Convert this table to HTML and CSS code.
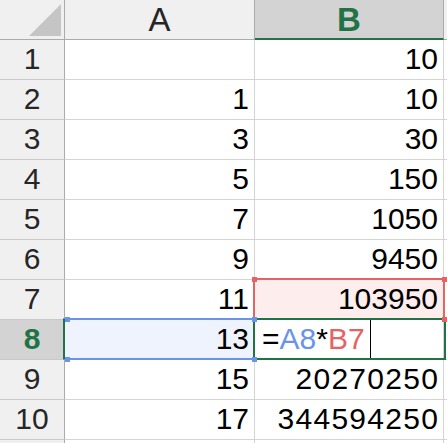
FILE: index.html
```html
<!DOCTYPE html>
<html>
<head>
<meta charset="utf-8">
<link rel="stylesheet" href="styles.css">
</head>
<body>
<div class="sheet">
  <div class="grid">
    <div class="corner"><svg width="64" height="39" viewBox="0 0 64 39"><polygon points="61,4 61,36 29,36" fill="#c5c5c5"/></svg></div>
    <div class="colhead">A</div>
    <div class="colhead sel">B</div>
    <div class="colhead edge"></div>

    <div class="rowhead">1</div><div class="cell"></div><div class="cell">10</div><div class="cell edge"></div>
    <div class="rowhead">2</div><div class="cell">1</div><div class="cell">10</div><div class="cell edge"></div>
    <div class="rowhead">3</div><div class="cell">3</div><div class="cell">30</div><div class="cell edge"></div>
    <div class="rowhead">4</div><div class="cell">5</div><div class="cell">150</div><div class="cell edge"></div>
    <div class="rowhead">5</div><div class="cell">7</div><div class="cell">1050</div><div class="cell edge"></div>
    <div class="rowhead">6</div><div class="cell">9</div><div class="cell">9450</div><div class="cell edge"></div>
    <div class="rowhead">7</div><div class="cell">11</div><div class="cell ref-red">103950</div><div class="cell edge"></div>
    <div class="rowhead sel">8</div><div class="cell ref-blue">13</div><div class="cell editing"><span>=</span><span class="c-blue">A8</span><span>*</span><span class="c-red">B7</span><span class="caret"></span></div><div class="cell edge"></div>
    <div class="rowhead">9</div><div class="cell">15</div><div class="cell"><span class="wide">20270250</span></div><div class="cell edge"></div>
    <div class="rowhead">10</div><div class="cell">17</div><div class="cell"><span class="wide">344594250</span></div><div class="cell edge"></div>
    <div class="rowhead short"></div><div class="cell short"></div><div class="cell short"></div><div class="cell short edge"></div>
  </div>

  <div class="box box-red">
    <i class="dot tl red"></i><i class="dot tr red"></i><i class="dot br red"></i>
  </div>
  <div class="box box-blue">
    <i class="dot tl blue"></i><i class="dot tr blue"></i><i class="dot bl blue"></i><i class="dot br blue"></i>
  </div>
  <div class="box box-green"></div>
  <div class="rowhead-mark"></div>
</div>
</body>
</html>
```
FILE: styles.css
```css
* { box-sizing: border-box; }
html, body { margin: 0; padding: 0; background: #fff; }
body { width: 447px; height: 443px; overflow: hidden; font-family: "Liberation Sans", Arial, sans-serif; }

.sheet { position: relative; width: 447px; height: 443px; }

.grid {
  display: grid;
  grid-template-columns: 65px 190px 189px 3px;
  grid-template-rows: repeat(11, 40px) 3px;
}

.corner {
  background: #f0f0f0;
  border-right: 1px solid #ababab;
  border-bottom: 1px solid #ababab;
}
.corner svg { display: block; }

.colhead {
  background: #f0f0f0;
  border-right: 1px solid #ababab;
  border-bottom: 1px solid #ababab;
  display: flex;
  align-items: center;
  justify-content: center;
  font-size: 33px;
  color: #262626;
  padding-top: 1px;
}
.colhead.sel {
  background: #d3d3d3;
  color: #217346;
  font-weight: bold;
  border-bottom: 2px solid #217346;
}
.colhead.edge { border-right: none; }

.rowhead {
  background: #f0f0f0;
  border-right: 1px solid #ababab;
  border-bottom: 1px solid #c8c8c8;
  display: flex;
  align-items: center;
  justify-content: center;
  font-size: 30px;
  color: #262626;
  padding-bottom: 2px;
}
.rowhead.sel {
  background: #d3d3d3;
  color: #217346;
  font-weight: bold;
}

.cell {
  border-right: 1px solid #d4d4d4;
  border-bottom: 1px solid #d4d4d4;
  display: flex;
  align-items: center;
  justify-content: flex-end;
  padding: 0 5px 2px 0;
  font-size: 30px;
  color: #000;
  white-space: nowrap;
}
.cell.edge { border-right: none; padding: 0; }
.short { border-bottom: none !important; }

.wide { letter-spacing: 1.3px; margin-right: -1.3px; }

.ref-red { background: #fdeded; }
.ref-blue { background: #eef3fd; }

.cell.editing {
  justify-content: flex-start;
  padding-left: 7px;
}
.c-blue { color: #6a93ea; }
.c-red { color: #e46464; }
.caret {
  align-self: stretch;
  width: 1px;
  background: #000;
  margin: 0 0 -2px 5px;
}

.box { position: absolute; border: 2px solid; }
.box-red { left: 253px; top: 278px; width: 192px; height: 42px; border-color: #e46464; }
.box-blue { left: 63px; top: 318px; width: 192px; height: 42px; border-color: #6a93ea; }
.box-green { left: 253px; top: 318px; width: 193px; height: 42px; border-color: #217346; }
.rowhead-mark { position: absolute; left: 63px; top: 319px; width: 2px; height: 40px; background: #217346; }

.dot { position: absolute; width: 5px; height: 5px; z-index: 2; }
.dot.red { background: #e46464; }
.dot.blue { background: #6a93ea; }
.dot.tl { left: -3px; top: -3px; }
.dot.tr { right: -4px; top: -3px; }
.dot.bl { left: -1px; bottom: -4px; }
.dot.br { right: -4px; bottom: -4px; }
.box-blue .dot.tl { left: 0; }
.box-blue .dot.bl { left: 0; }
```
